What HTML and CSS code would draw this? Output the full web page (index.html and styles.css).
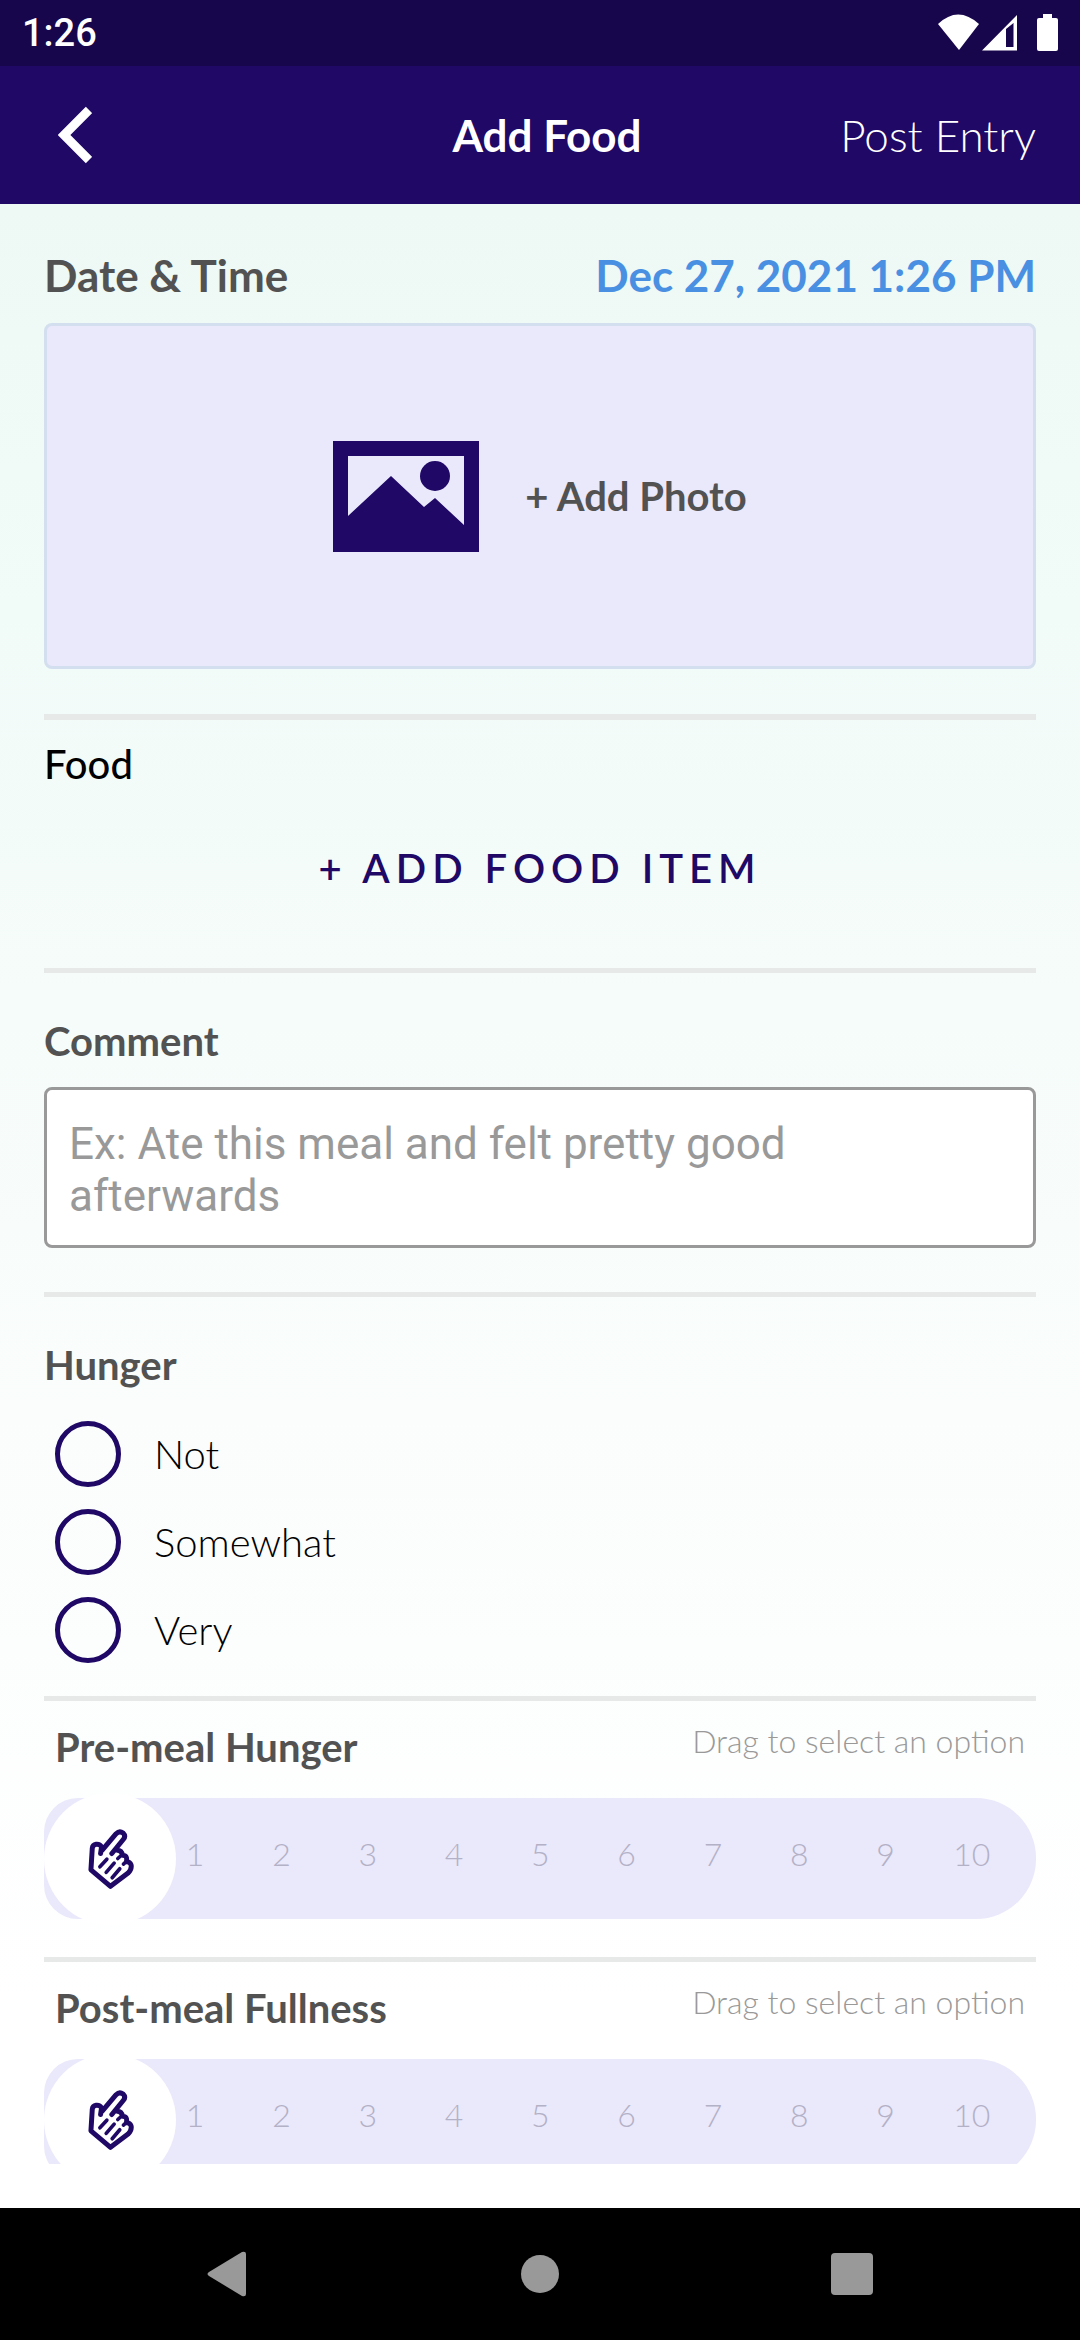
FILE: index.html
```html
<!DOCTYPE html>
<html lang="en">
<head>
    <meta charset="UTF-8">
    <meta name="viewport" content="width=device-width, initial-scale=1.0">
    <title>Add Food</title>
    <link rel="stylesheet" href="styles.css">
</head>
<body>
    <div class="status-bar">
        <span>1:26</span>
        <svg class="status-icons" width="122" height="38" viewBox="0 0 122 38" fill="#fff">
            <path d="M0 10Q20 -9 41 10L21 36Z"/>
            <path fill-rule="evenodd" d="M44 36.500L79 1V36.500ZM68 15V33H75.500V9Z"/>
            <path d="M105 0h9v4h4q2 0 2 2v29q0 2 -2 2h-17q-2 0 -2 -2v-29q0 -2 2 -2h4z"/>
        </svg>
    </div>
    <header class="header">
        <button class="back" aria-label="Back">
            <svg width="34" height="58" viewBox="0 0 34 58" fill="none" stroke="#fff" stroke-width="9">
                <path d="M31 4L6 29L31 54"/>
            </svg>
        </button>
        <h1>Add Food</h1>
        <button class="post">Post Entry</button>
    </header>

    <main class="main">
        <form class="entry">
            <div class="date-row">
                <span>Date &amp; Time</span>
                <button type="button" class="date">Dec 27, 2021 1:26 PM</button>
            </div>
            <button type="button" class="photo">
                <svg width="146" height="111" viewBox="0 0 146 111">
                    <path fill="#1f0866" fill-rule="evenodd" d="M0 0H146V111H0ZM15 15V75L58 35L91 66L102 57L131 84V15Z"/>
                    <circle cx="102" cy="35" r="15" fill="#1f0866"/>
                </svg>
                <span>+ Add Photo</span>
            </button>

            <section class="food">
                <h2>Food</h2>
                <button type="button" class="add-item">+ ADD FOOD ITEM</button>
            </section>

            <section class="comment">
                <label class="title" for="comment">Comment</label>
                <textarea id="comment" rows="2" placeholder="Ex: Ate this meal and felt pretty good afterwards"></textarea>
            </section>

            <fieldset class="hunger">
                <legend class="title">Hunger</legend>
                <label class="option"><input type="radio" name="hunger" value="not">Not</label>
                <label class="option"><input type="radio" name="hunger" value="somewhat">Somewhat</label>
                <label class="option"><input type="radio" name="hunger" value="very">Very</label>
            </fieldset>

            <section class="scale">
                <div class="scale-head">
                    <label class="title" for="pre-meal">Pre-meal Hunger</label>
                    <span class="hint">Drag to select an option</span>
                </div>
                <div class="slider">
                    <ol class="numbers">
                        <li>1</li><li>2</li><li>3</li><li>4</li><li>5</li>
                        <li>6</li><li>7</li><li>8</li><li>9</li><li>10</li>
                    </ol>
                    <input id="pre-meal" type="range" min="0" max="10" value="0">
                    <svg class="hand" viewBox="263 383 137 181">
                        <path class="outline" d="M300 457L303 437Q298 428 287 429Q276 431 275 441L271 506L330 556L383 516Q395 503 392 491Q389 482 378 482Q382 462 366 462Q364 447 350 447M305 447L347 397Q357 387 368 395Q377 404 369 414L334 457"/>
                        <path class="fingers" d="M352 472L362 463M369 489L379 480M319 474L298 497M341 486L317 514M358 503L335 530"/>
                    </svg>
                </div>
            </section>

            <section class="scale">
                <div class="scale-head">
                    <label class="title" for="post-meal">Post-meal Fullness</label>
                    <span class="hint">Drag to select an option</span>
                </div>
                <div class="slider">
                    <ol class="numbers">
                        <li>1</li><li>2</li><li>3</li><li>4</li><li>5</li>
                        <li>6</li><li>7</li><li>8</li><li>9</li><li>10</li>
                    </ol>
                    <input id="post-meal" type="range" min="0" max="10" value="0">
                    <svg class="hand" viewBox="263 383 137 181">
                        <path class="outline" d="M300 457L303 437Q298 428 287 429Q276 431 275 441L271 506L330 556L383 516Q395 503 392 491Q389 482 378 482Q382 462 366 462Q364 447 350 447M305 447L347 397Q357 387 368 395Q377 404 369 414L334 457"/>
                        <path class="fingers" d="M352 472L362 463M369 489L379 480M319 474L298 497M341 486L317 514M358 503L335 530"/>
                    </svg>
                </div>
            </section>
        </form>
    </main>

    <nav class="nav-bar">
        <button aria-label="Back">
            <svg width="44" height="48" viewBox="0 0 44 48"><path d="M36 2Q40 1 40 4V44Q40 47 36 46L3 26Q0 24 3 22Z"/></svg>
        </button>
        <button aria-label="Home">
            <svg width="44" height="48" viewBox="0 0 44 48"><circle cx="22" cy="24" r="19"/></svg>
        </button>
        <button aria-label="Recent apps">
            <svg width="44" height="48" viewBox="0 0 44 48"><rect x="1" y="3" width="42" height="42" rx="4"/></svg>
        </button>
    </nav>
</body>
</html>
```

FILE: styles.css
```css
* {
    box-sizing: border-box;
}

body {
    font-family: Lato, "Open Sans", sans-serif;
    font-size: 40px;
    line-height: 48px;
    color: #000;
    margin: 0;
    height: 100vh;
    display: flex;
    flex-direction: column;
}

button {
    font: inherit;
    color: inherit;
    background: none;
    border: none;
    padding: 0;
    cursor: pointer;
}

svg {
    display: block;
}

h1, h2 {
    margin: 0;
    font-size: inherit;
}

.status-bar {
    height: 66px;
    padding: 0 20px 0 22px;
    background-color: #18064c;
    color: #fff;
    font-family: Roboto, sans-serif;
    font-size: 38px;
    font-weight: 500;
    display: flex;
    justify-content: space-between;
    align-items: center;
}

.header {
    height: 138px;
    padding: 0 44px 0 58px;
    background-color: #1f0866;
    color: #fff;
    font-size: 44px;
    display: grid;
    grid-template-columns: 1fr auto 1fr;
    align-items: center;
}

.back {
    justify-self: start;
}

.post {
    justify-self: end;
    font-weight: 300;
}

.main {
    flex: 1;
    min-height: 0;
    padding: 0 44px 44px;
    background: linear-gradient(#eef8f5, #f1fbf8 20%, #fafdfc 60%, #fff 90%);
    display: flex;
}

.entry {
    flex: 1;
    overflow-y: auto;
    scrollbar-width: none;
}

.date-row {
    padding: 47px 0 24px;
    font-size: 44px;
    font-weight: 700;
    color: #525252;
    display: flex;
    justify-content: space-between;
}

.date {
    color: #4a90e2;
}

.photo {
    width: 100%;
    height: 346px;
    margin-bottom: 45px;
    background-color: #eae8fb;
    border: 3px solid #d3deef;
    border-radius: 8px;
    color: #525252;
    font-weight: 700;
    display: flex;
    justify-content: center;
    align-items: center;
    gap: 46px;
}

.food {
    border-top: 6px solid #e6e9e8;
    padding: 20px 0 76px;
    display: flex;
    flex-direction: column;
    gap: 56px;
}

.food h2 {
    font-weight: 500;
}

.add-item {
    color: #1f0866;
    font-weight: 600;
    letter-spacing: 6px;
}

.title {
    font-weight: 700;
    color: #525252;
}

.comment {
    border-top: 5px solid #e6e9e8;
    padding: 44px 0;
}

.comment .title {
    display: block;
    margin-bottom: 22px;
}

textarea {
    display: block;
    width: 100%;
    padding: 28px 44px 23px 22px;
    background-color: #fff;
    border: 3px solid #999;
    border-radius: 8px;
    font-family: Roboto, sans-serif;
    font-size: 44px;
    line-height: 52px;
    resize: none;
}

textarea::placeholder {
    color: #999;
}

.hunger {
    border: none;
    border-top: 5px solid #e6e9e8;
    margin: 0;
    padding: 44px 0 22px;
}

.hunger .title {
    float: left;
    width: 100%;
    padding: 0;
    margin-bottom: 21px;
}

.option {
    clear: both;
    height: 88px;
    padding-left: 11px;
    font-weight: 300;
    display: flex;
    align-items: center;
    gap: 33px;
}

.option input {
    appearance: none;
    width: 66px;
    height: 66px;
    margin: 0;
    border: 5px solid #1f0866;
    border-radius: 50%;
}

.option input:checked {
    background: radial-gradient(#1f0866 50%, transparent 52%);
}

.scale {
    border-top: 5px solid #e6e9e8;
    padding: 22px 0 38px;
}

.scale-head {
    padding: 0 11px 27px;
    display: flex;
    justify-content: space-between;
}

.hint {
    font-size: 32px;
    line-height: 36px;
    font-weight: 300;
    color: #999;
}

/* track, numbers, thumb and hand share one grid cell */
.slider {
    height: 121px;
    background-color: #eae8fb;
    border-radius: 34px 60px 60px 34px;
    display: grid;
    align-items: center;
}

.slider > * {
    grid-area: 1 / 1;
}

.numbers {
    list-style: none;
    margin: 0;
    padding: 0 21px 10px 108px;
    display: grid;
    grid-template-columns: repeat(10, 1fr);
    text-align: center;
    font-size: 32px;
    font-weight: 300;
    color: #b3b1c6;
}

.slider input {
    appearance: none;
    width: 100%;
    height: 121px;
    margin: 0;
    background: none;
}

.slider input::-webkit-slider-thumb {
    appearance: none;
    width: 132px;
    height: 132px;
    border-radius: 50%;
    background-color: #fff;
}

.hand {
    width: 46px;
    height: 60px;
    margin-left: 44px;
    z-index: 1;
    pointer-events: none;
    fill: none;
    stroke: #1f0866;
    stroke-linecap: round;
    stroke-linejoin: round;
}

.hand .outline {
    stroke-width: 15px;
}

.hand .fingers {
    stroke-width: 11px;
}

.nav-bar {
    height: 132px;
    padding: 0 72px;
    background-color: #000;
    display: grid;
    grid-template-columns: repeat(3, 1fr);
    justify-items: center;
    align-items: center;
}

.nav-bar svg {
    fill: #999;
}
```
